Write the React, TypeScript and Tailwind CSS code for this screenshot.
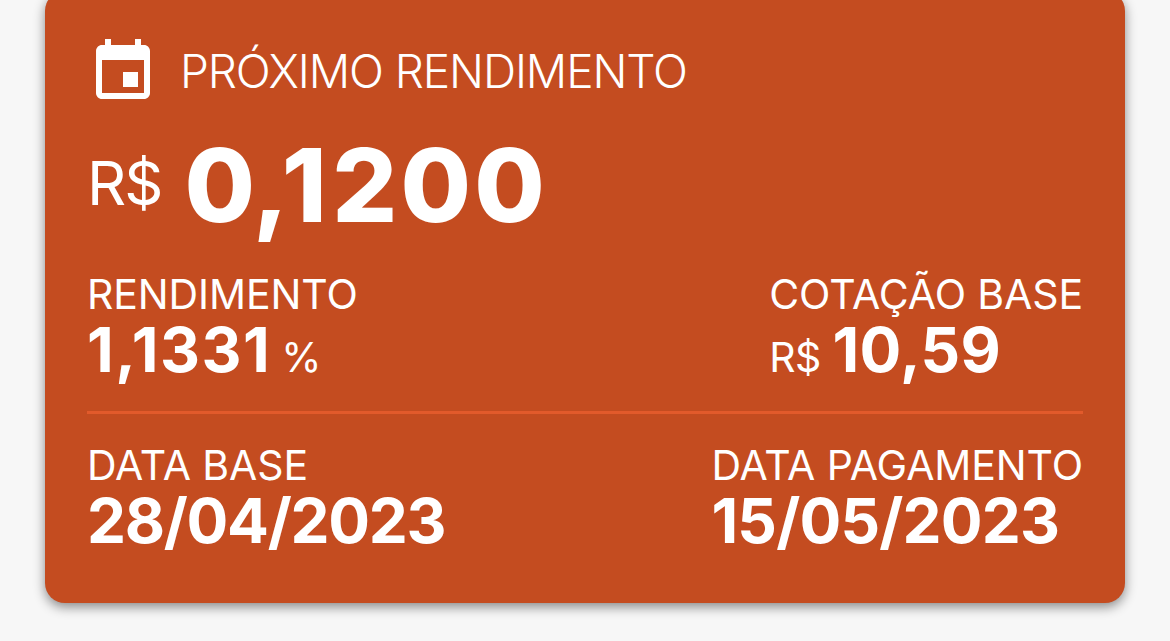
interface StatProps {
  label: string;
  children: React.ReactNode;
}

const Stat: React.FC<StatProps> = ({ label, children }) => (
  <div>
    <h3 className="text-[41px] leading-[50px] tracking-[-0.1px]">{label}</h3>
    <div className="text-[62px] font-bold leading-[62px] whitespace-nowrap">{children}</div>
  </div>
);

const App: React.FC = () => {
  return (
    <main className="h-[641px] w-[1170px] overflow-hidden bg-[#f7f7f7] px-[45px] font-['Inter',sans-serif] text-white">
      <section className="-mt-[9px] h-[612px] rounded-[20px] bg-[#c44c20] px-[42px] pt-[47px] shadow-[0_4px_12px_rgba(0,0,0,0.45)]">
        <header className="flex h-[68px] items-center">
          <svg className="h-[72px] w-[72px]" viewBox="0 0 24 24" fill="currentColor">
            <path d="M17 12h-5v5h5v-5zM16 1v2H8V1H6v2H5c-1.11 0-1.99.9-1.99 2L3 19c0 1.1.89 2 2 2h14c1.1 0 2-.9 2-2V5c0-1.1-.9-2-2-2h-1V1h-2zm3 18H5V8h14v11z" />
          </svg>
          <h2 className="-mt-[2px] ml-[21px] text-[46px] font-light tracking-[-1.1px]">PRÓXIMO RENDIMENTO</h2>
        </header>

        <div className="mt-[15px] flex h-[128px] items-center whitespace-nowrap">
          <span className="-mt-[2px] text-[61px] tracking-[-2px]">R$</span>
          <strong className="ml-[23px] text-[102px] font-extrabold tracking-[3.1px]">
            <span className="tracking-[1px]">0,</span>
            <span className="-ml-[8px] tracking-[5.5px]">1</span>200
          </strong>
        </div>

        <div className="mt-[20px] flex h-[145px] justify-between border-b-[3px] border-[#e25a2b]">
          <Stat label="RENDIMENTO">
            <span className="tracking-[1.5px]">1,1331</span>
            <small className="ml-[10px] text-[41px] font-normal">%</small>
          </Stat>
          <Stat label="COTAÇÃO BASE">
            <small className="mr-[12px] text-[41px] font-normal tracking-[-0.7px]">R$</small>
            <span className="tracking-[0.3px]">10,59</span>
          </Stat>
        </div>

        <div className="mt-[26px] flex justify-between">
          <Stat label="DATA BASE">
            <span className="tracking-[-1.3px]">28/04/2023</span>
          </Stat>
          <Stat label="DATA PAGAMENTO">
            <span className="tracking-[-0.8px]">15/05/2023</span>
          </Stat>
        </div>
      </section>
    </main>
  );
};

export default App;
